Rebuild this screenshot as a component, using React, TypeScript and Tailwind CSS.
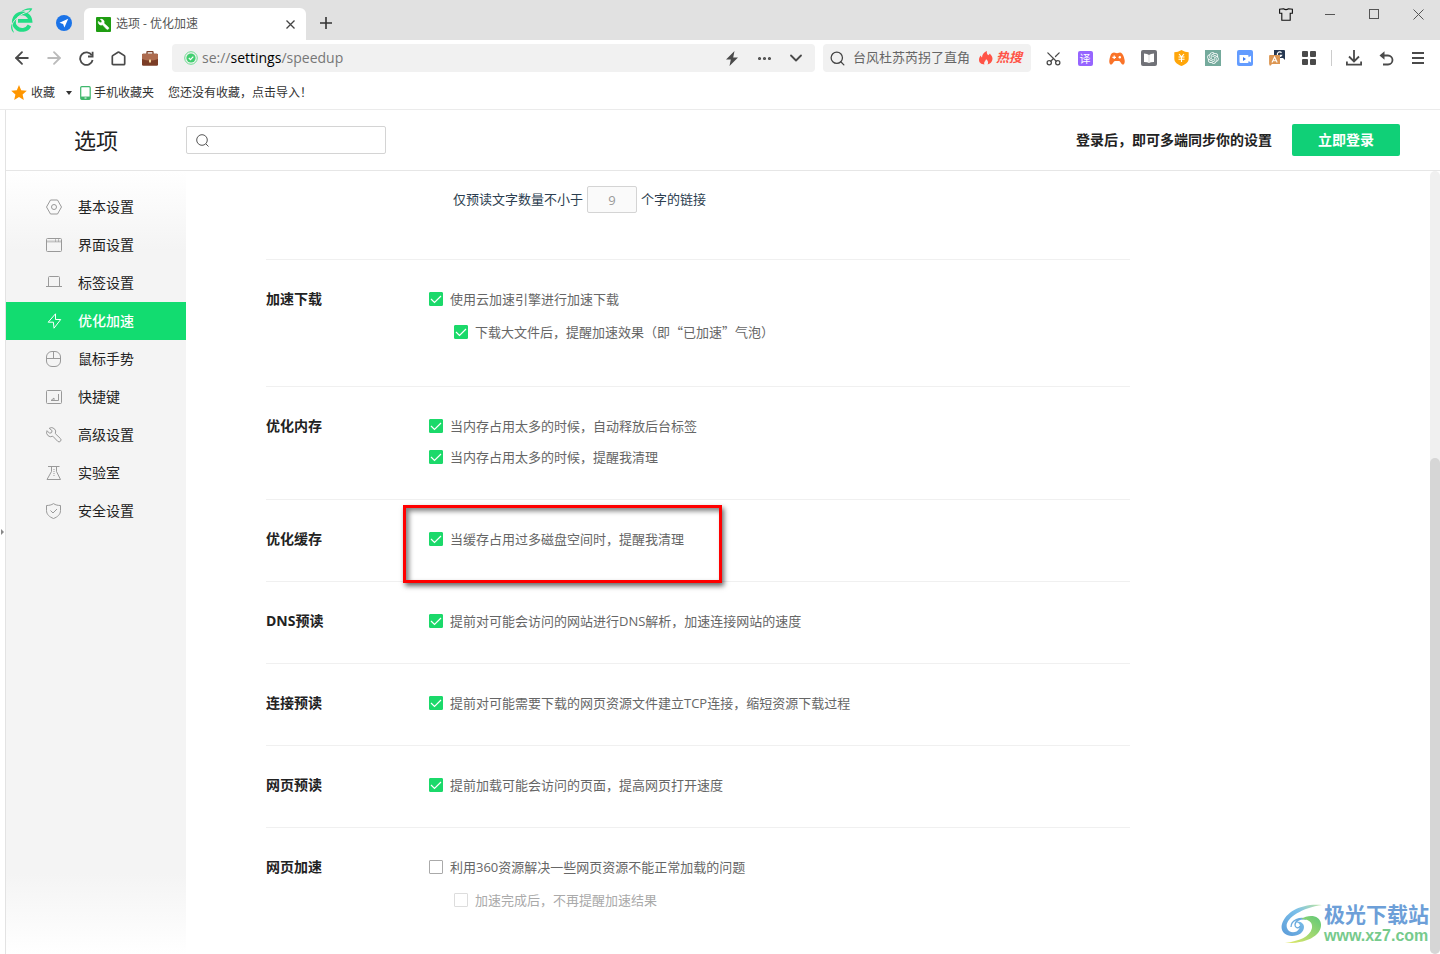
import { useState } from 'react';
import type { ReactNode } from 'react';
import { ArrowLeft, ArrowRight, ChevronDown, Ellipsis, Scissors, Search } from 'lucide-react';
import { RiOpenaiFill } from 'react-icons/ri';

interface Option {
  id: string;
  label: string;
  checked: boolean;
  nested?: boolean;
  disabled?: boolean;
}

interface Section {
  title: string;
  options: Option[];
  highlighted?: boolean;
}

const SECTIONS: Section[] = [
  {
    title: '加速下载',
    options: [
      { id: 'cloud', label: '使用云加速引擎进行加速下载', checked: true },
      { id: 'bubble', label: '下载大文件后，提醒加速效果（即“已加速”气泡）', checked: true, nested: true },
    ],
  },
  {
    title: '优化内存',
    options: [
      { id: 'release', label: '当内存占用太多的时候，自动释放后台标签', checked: true },
      { id: 'memory', label: '当内存占用太多的时候，提醒我清理', checked: true },
    ],
  },
  {
    title: '优化缓存',
    highlighted: true,
    options: [{ id: 'cache', label: '当缓存占用过多磁盘空间时，提醒我清理', checked: true }],
  },
  {
    title: 'DNS预读',
    options: [{ id: 'dns', label: '提前对可能会访问的网站进行DNS解析，加速连接网站的速度', checked: true }],
  },
  {
    title: '连接预读',
    options: [{ id: 'tcp', label: '提前对可能需要下载的网页资源文件建立TCP连接，缩短资源下载过程', checked: true }],
  },
  {
    title: '网页预读',
    options: [{ id: 'preload', label: '提前加载可能会访问的页面，提高网页打开速度', checked: true }],
  },
  {
    title: '网页加速',
    options: [
      { id: 'res360', label: '利用360资源解决一些网页资源不能正常加载的问题', checked: false },
      { id: 'result', label: '加速完成后，不再提醒加速结果', checked: false, nested: true, disabled: true },
    ],
  },
];

// Sidebar icons all share a 16px box and a 1px stroke
const MENU: { label: string; icon: ReactNode }[] = [
  {
    label: '基本设置',
    icon: (
      <>
        <path d="M4.5 1h7l4 7-4 7h-7l-4-7z" />
        <circle cx="8" cy="8" r="2.5" />
      </>
    ),
  },
  {
    label: '界面设置',
    icon: (
      <>
        <path d="M1 4.500h14" strokeOpacity="0.5" strokeWidth="2" />
        <path d="M9.500 2v3M12.500 2v3" strokeOpacity="0.6" />
        <rect x="0.5" y="1.5" width="15" height="13" rx="1" />
      </>
    ),
  },
  { label: '标签设置', icon: <path d="M2.5 12V2.5q0-1 1-1h9q1 0 1 1V12M0 11.5h16" /> },
  { label: '优化加速', icon: <path d="M9.5 .8 2.2 9.2h5.2L8 15.2l6.7-8.7H9.5z" /> },
  {
    label: '鼠标手势',
    icon: (
      <>
        <rect x="0.5" y="0.5" width="14" height="15" rx="5.5" />
        <path d="M.5 7.5h14M7.5.5v7" />
      </>
    ),
  },
  {
    label: '快捷键',
    icon: (
      <>
        <rect x="0.5" y="1.5" width="15" height="13" rx="1" />
        <path d="M12.500 5v6.500H5L8 9v2" />
      </>
    ),
  },
  {
    label: '高级设置',
    icon: (
      <path d="M3.200 1.300A4.200 4.200 0 0 1 9.300 6.600l5.100 4.900a1.900 1.900 0 0 1-2.700 2.800L6.800 9.200A4.200 4.200 0 0 1 1 3.700l2.500 2.500 2-.5.6-2z" strokeLinejoin="round" />
    ),
  },
  {
    label: '实验室',
    icon: (
      <>
        <path d="M2 1.500h11.500M5.500 1.500v5L1 14.500h13.500L10.500 6.500v-5" />
        <path d="M8 4v7" strokeDasharray="1 1" />
      </>
    ),
  },
  {
    label: '安全设置',
    icon: (
      <>
        <path d="M7.5.6C9.500 2 12 2.500 14.500 2.500v5c0 4-3 6.500-7 8-4-1.500-7-4-7-8v-5C3 2.500 5.500 2 7.500.6z" />
        <path d="m4.500 7.500 2.500 2.500 4-4" />
      </>
    ),
  },
];

function ToolButton({ label, children }: { label: string; children: ReactNode }) {
  return (
    <button type="button" aria-label={label} className="flex h-7 w-8 shrink-0 items-center justify-center text-[#4a4a4a]">
      {children}
    </button>
  );
}

function BrowserLogo() {
  return (
    <svg width="24" height="26" viewBox="0 0 24 26" fill="none" className="shrink-0">
      <path d="M19.500 18.500a8.300 8.300 0 1 1 .9-4.700H8" stroke="#22dd85" strokeWidth="3.800" />
      <path d="M1.300 20.500C2 14 10 6.500 18 5" stroke="#e1e1e1" strokeWidth="1" />
      <path d="M3.500 25.500C.8 23 .6 19.500 2 16.500c.3 3.500.3 6 2 9z" fill="#22dd85" />
      <path d="M11 4.800C14 1.500 19 .5 22.300 1.500 21.500 4 19 5.800 16 6.500c2-1.200 3.400-2.300 4.200-3.700-3-.4-6 .4-9.200 2z" fill="#22dd85" />
    </svg>
  );
}

function TabStrip() {
  return (
    <div className="flex h-10 items-end bg-[#e1e1e1]">
      <div className="flex h-10 flex-1 items-end pl-[10px]">
        <div className="flex h-10 w-[46px] items-center">
          <BrowserLogo />
        </div>
        <button type="button" aria-label="导航" className="mr-3 flex h-[34px] w-4 items-center">
          <svg width="16" height="16" viewBox="0 0 16 16">
            <circle cx="8" cy="8" r="8" fill="#1a73e8" />
            <path d="M12.200 3.800 3.500 7.700l3.600 1.200 1.300 3.700z" fill="#fff" />
          </svg>
        </button>
        <div className="flex h-8 w-[222px] items-center rounded-t-md bg-white pr-2 pl-3">
          <svg width="15" height="15" viewBox="0 0 15 15" className="shrink-0">
            <rect width="15" height="15" rx="1" fill="#1f9d12" />
            <path d="M2.300 4.300a3 3 0 0 0 4.200 3.500l4 4.300a1.300 1.300 0 0 0 1.900-1.900L8 6.300A3 3 0 0 0 4.300 2.300l1.700 1.700-.4 1.300-1.400.5z" fill="#fff" stroke="#fff" strokeWidth="0.500" />
          </svg>
          <span className="ml-[5px] flex-1 text-xs text-[#555]">选项 - 优化加速</span>
          <button type="button" aria-label="关闭标签" className="flex h-4 w-4 items-center justify-center">
            <svg width="9" height="9" viewBox="0 0 9 9" stroke="#444" strokeWidth="1.300">
              <path d="m.5.5 8 8M8.500.5l-8 8" />
            </svg>
          </button>
        </div>
        <button type="button" aria-label="新建标签" className="flex h-[34px] w-10 items-center justify-center">
          <svg width="12" height="12" viewBox="0 0 12 12" stroke="#333" strokeWidth="1.600">
            <path d="M0 6h12M6 0v12" />
          </svg>
        </button>
      </div>
      <div className="flex h-10 items-start">
        <button type="button" aria-label="皮肤" className="flex h-7 w-11 items-center justify-center">
          <svg width="14" height="13" viewBox="0 0 14 13" fill="none" stroke="#111" strokeWidth="1.100">
            <path d="M4.500.8q2.500 1.600 5 0l3.900.4v4h-2.200v7H2.800v-7H.6v-4z" />
          </svg>
        </button>
        <button type="button" aria-label="最小化" className="flex h-7 w-11 items-center justify-center">
          <svg width="10" height="10" viewBox="0 0 10 10" stroke="#555">
            <path d="M0 5.500h10" />
          </svg>
        </button>
        <button type="button" aria-label="最大化" className="flex h-7 w-11 items-center justify-center">
          <svg width="10" height="10" viewBox="0 0 10 10" stroke="#555" fill="none">
            <rect x="0.5" y="0.5" width="9" height="9" />
          </svg>
        </button>
        <button type="button" aria-label="关闭" className="flex h-7 w-11 items-center justify-center">
          <svg width="11" height="11" viewBox="0 0 11 11" stroke="#555">
            <path d="m.5.5 10 10M10.500.5l-10 10" />
          </svg>
        </button>
      </div>
    </div>
  );
}

function Toolbar() {
  return (
    <div className="flex h-9 items-center bg-white px-[6px]">
      <ToolButton label="后退">
        <ArrowLeft size={20} strokeWidth={2.200} />
      </ToolButton>
      <ToolButton label="前进">
        <ArrowRight size={20} strokeWidth={2.200} className="text-[#bbb]" />
      </ToolButton>
      <ToolButton label="刷新">
        <svg width="15" height="15" viewBox="0 0 15 15" fill="none" stroke="currentColor" strokeWidth="1.800">
          <path d="M12.800 4.300A6.300 6.300 0 1 0 13.600 9" />
          <path d="M13.600.8v4.700H9" />
        </svg>
      </ToolButton>
      <ToolButton label="主页">
        <svg width="15" height="15" viewBox="0 0 15 15" fill="none" stroke="currentColor" strokeWidth="1.700">
          <path d="M1.300 5.500Q1.300 5 1.700 4.600L7 1.200q.5-.3 1 0l5.300 3.400q.4.400.4.900v7.200q0 1-1 1H2.300q-1 0-1-1z" />
        </svg>
      </ToolButton>
      <ToolButton label="工具箱">
        <svg width="16" height="15" viewBox="0 0 16 15">
          <path d="M5 3V1.200Q5 .7 5.500.7h5q.5 0 .5.5V3" fill="none" stroke="#7a4029" strokeWidth="1.300" />
          <rect y="2.800" width="16" height="12" rx="1.300" fill="#7b3d26" />
          <path d="M0 4q0-1.200 1.300-1.200h13.400Q16 2.800 16 4v4q-8 3-16 0z" fill="#ad6b4e" />
          <rect x="7" y="8.500" width="2" height="3" rx="0.500" fill="#f5d9a0" />
        </svg>
      </ToolButton>

      <div className="ml-[6px] flex h-7 flex-1 items-center rounded bg-[#f1f1f1] pr-[3px] pl-3">
        <svg width="14" height="14" viewBox="0 0 14 14" fill="none" className="shrink-0">
          <circle cx="7" cy="7" r="6.300" stroke="#6fdd92" />
          <circle cx="7" cy="7" r="4.600" fill="#42cf70" />
          <path d="m4.800 7 1.700 1.600 2.800-3" stroke="#fff" strokeWidth="1.200" />
        </svg>
        <div
          role="textbox"
          aria-label="地址栏"
          contentEditable
          suppressContentEditableWarning
          className="ml-1 flex-1 text-sm whitespace-nowrap text-[#777] outline-none"
        >
          se://<span className="text-black">settings</span>/speedup
        </div>
        <ToolButton label="极速模式">
          <svg width="12" height="15" viewBox="0 0 12 15" fill="currentColor">
            <path d="M8.500 0 0 8.500h4.800L3.500 15 12 6.500H7.200z" />
          </svg>
        </ToolButton>
        <ToolButton label="更多">
          <Ellipsis size={17} strokeWidth={2.500} />
        </ToolButton>
        <ToolButton label="展开">
          <ChevronDown size={20} strokeWidth={2.200} />
        </ToolButton>
      </div>

      <div className="ml-2 flex h-7 w-[208px] items-center rounded bg-[#f1f1f1] pl-[6px]">
        <Search size={17} strokeWidth={1.800} className="shrink-0 text-[#444]" />
        <input
          type="text"
          aria-label="搜索"
          placeholder="台风杜苏芮拐了直角"
          className="ml-[7px] w-[120px] text-[13px] outline-none placeholder:text-[#666]"
        />
        <a href="#hot" className="ml-[6px] flex items-center gap-[3px] text-[13px] font-bold whitespace-nowrap text-[#ff5346] italic">
          <svg width="14" height="14" viewBox="0 0 14 14" fill="currentColor">
            <path d="M5.500 13.500C2 13.500 0 11.500 0 8.800 0 6.800 1 5.500 1.800 4.500c.2 1 .6 1.500 1.200 2C3.200 3.500 5 1 8 0c-.6 2 .2 3.200 1.300 4.300L11 2.500c.2 1.200 2.700 2.500 2.500 5.500-.2 3-2.500 5-5 5.500 1-1.500 1-3.500-1.500-5.500 0 2-2.800 3-1.500 5.500z" />
          </svg>
          热搜
        </a>
      </div>

      <div className="ml-[6px] flex items-center">
        <ToolButton label="截图">
          <Scissors size={17} strokeWidth={1.800} className="-rotate-90" />
        </ToolButton>
        <ToolButton label="翻译">
          <span className="flex h-[15px] w-[15px] items-center justify-center rounded-xs bg-[#9665ff] text-[11px] leading-none text-white">译</span>
        </ToolButton>
        <ToolButton label="游戏">
          <svg width="16" height="13" viewBox="0 0 16 13">
            <path d="M4 .8Q5 .3 6 .8q2 .8 4 0 1-.5 2 0Q14.500 2 15.600 8c.5 3-.6 4.600-1.600 4.600-1.800 0-2.500-3.600-4-3.600H6c-1.500 0-2.200 3.600-4 3.600C1 12.600-.1 11 .4 8 1.500 2 2.500 1.500 4 .8z" fill="#fa7328" />
            <path d="M5.200 3.500v3.600M3.400 5.300H7" stroke="#fff" strokeWidth="1.200" />
            <circle cx="10.800" cy="5.300" r="1.200" fill="#fff" />
          </svg>
        </ToolButton>
        <ToolButton label="阅读">
          <svg width="16" height="16" viewBox="0 0 16 16">
            <rect width="16" height="16" rx="2" fill="#707177" />
            <path d="M3 3.500q3.500 0 5 1.500 1.500-1.500 5-1.500v8.500q-3.500 0-5 1-1.500-1-5-1z" fill="#fff" />
            <path d="M8 5v8" stroke="#ccc" strokeWidth="0.700" />
          </svg>
        </ToolButton>
        <ToolButton label="购物">
          <svg width="15" height="16" viewBox="0 0 15 16">
            <path d="M7.500 0Q11 2.200 14.700 2.200v6.300c0 4-3.500 6-7.200 7.500C3.800 14.500.3 12.500.3 8.500V2.200Q4 2.200 7.500 0z" fill="#ffa60a" />
            <path d="m5 4 2.500 2.800L10 4M4.500 7h6M4.500 9.300h6M7.500 7v5" stroke="#fff" strokeWidth="1.100" fill="none" />
          </svg>
        </ToolButton>
        <ToolButton label="AI 助手">
          <span className="flex h-4 w-4 items-center justify-center bg-[#74aa9c] text-white">
            <RiOpenaiFill size={14} />
          </span>
        </ToolButton>
        <ToolButton label="录屏">
          <svg width="16" height="16" viewBox="0 0 16 16">
            <rect width="16" height="16" rx="2" fill="#639cff" />
            <path d="M2.500 5h8q1 0 1 1v1.200l2.500-1.500v6.800l-2.500-1.500v1.200q0 .8-1 .8h-7q-1 0-1-1z" fill="#fff" />
            <path d="M6 7v4l3-2z" fill="#3d7df0" />
          </svg>
        </ToolButton>
        <ToolButton label="划词翻译">
          <svg width="16" height="16" viewBox="0 0 16 16" fill="none">
            <path d="M5 0h10q1 0 1 1v9l-2-2H5z" fill="#263852" />
            <path d="M12.500 2.800a2.300 2.300 0 1 0 .2 2.400h-2" stroke="#fff" strokeWidth="1.100" />
            <path d="M1 5h9q1 0 1 1v8H3l-2 2-.9-2V6q0-1 .9-1z" fill="#dc9652" />
            <path d="m3 12.500 2.600-5.500 2.600 5.500M4 10.800h3.200" stroke="#fff" strokeWidth="1.100" />
          </svg>
        </ToolButton>
        <ToolButton label="扩展">
          <svg width="14" height="14" viewBox="0 0 14 14" fill="currentColor">
            <rect width="6" height="6" rx="1" />
            <rect x="8" width="6" height="6" rx="1" />
            <rect y="8" width="6" height="6" rx="1" />
            <rect x="8" y="8" width="6" height="6" rx="1" />
          </svg>
        </ToolButton>
        <span className="mx-[6px] h-4 w-px bg-[#ccc]" />
        <ToolButton label="下载">
          <svg width="16" height="16" viewBox="0 0 16 16" fill="none" stroke="currentColor" strokeWidth="1.800">
            <path d="M8 0v11M3 6.500l5 5 5-5M.9 11.500v3.200h14.200v-3.200" />
          </svg>
        </ToolButton>
        <ToolButton label="恢复">
          <svg width="15" height="15" viewBox="0 0 15 15" fill="none" stroke="currentColor" strokeWidth="1.800">
            <path d="M2 4.500h7a4.500 4.500 0 0 1 0 9H4" />
            <path d="M5.500.3v8.400L.5 4.500z" fill="currentColor" stroke="none" />
          </svg>
        </ToolButton>
        <ToolButton label="菜单">
          <svg width="12" height="12" viewBox="0 0 12 12" stroke="currentColor" strokeWidth="1.800">
            <path d="M0 1h12M0 6h12M0 11h12" />
          </svg>
        </ToolButton>
      </div>
    </div>
  );
}

function BookmarkBar() {
  return (
    <div className="flex h-[34px] items-center border-b border-[#ebebeb] bg-white pl-[11px] text-xs text-[#333]">
      <button type="button" className="flex items-center">
        <svg width="16" height="15" viewBox="0 0 16 15" fill="#ff9600">
          <path d="m8 0 2.200 5.200 5.600.5-4.200 3.700 1.200 5.500L8 12l-4.800 2.900 1.200-5.500L.2 5.700l5.600-.5z" />
        </svg>
        <span className="ml-1">收藏</span>
        <svg width="6" height="4" viewBox="0 0 6 4" fill="#333" className="ml-[11px]">
          <path d="M0 0h6L3 4z" />
        </svg>
      </button>
      <a href="#mobile" className="ml-2 flex items-center gap-[3px]">
        <svg width="11" height="14" viewBox="0 0 11 14" fill="none">
          <rect x="0.700" y="0.700" width="9.500" height="12.600" rx="1" stroke="#3fb76c" strokeWidth="1.200" />
          <path d="M1 11.800h9" stroke="#3fb76c" strokeWidth="2.500" />
          <path d="M4.500 12h2" stroke="#fff" />
        </svg>
        手机收藏夹
      </a>
      <a href="#import" className="ml-[14px]">您还没有收藏，点击导入！</a>
    </div>
  );
}

function Header() {
  return (
    <header className="flex h-[61px] items-center border-b border-[#e6e6e6] bg-white pr-10 pl-[68px]">
      <h1 className="w-28 text-[22px] text-[#222]">选项</h1>
      <label className="flex h-7 w-[200px] items-center rounded-xs border border-[#d4d4d4] pl-[9px]">
        <svg width="13" height="13" viewBox="0 0 13 13" fill="none" stroke="#555" className="shrink-0">
          <circle cx="6" cy="6" r="5.300" />
          <path d="m9.800 9.800 2.700 2.700" />
        </svg>
        <input type="search" aria-label="搜索设置" className="ml-2 w-40 text-[13px] outline-none" />
      </label>
      <p className="ml-auto text-sm font-bold text-[#222]">登录后，即可多端同步你的设置</p>
      <button type="button" className="ml-5 h-8 w-[108px] rounded-xs bg-[#10d077] text-sm font-bold text-white">
        立即登录
      </button>
    </header>
  );
}

function Sidebar() {
  return (
    <nav className="w-[180px] shrink-0 bg-[linear-gradient(#fff,#f4f4f4_80px,#f4f4f4_calc(100%-80px),#fff)] pt-[17px]">
      <div className="flex flex-col">
        {MENU.map((item) => {
          const active = item.label === '优化加速';
          return (
            <a
              key={item.label}
              href="#"
              aria-current={active ? 'page' : undefined}
              className={`flex h-[38px] items-center gap-4 pl-10 text-sm ${active ? 'bg-[#12dc70] font-medium text-white' : 'text-[#222]'}`}
            >
              <svg width="16" height="16" viewBox="0 0 16 16" fill="none" strokeWidth="1" stroke="currentColor" className={active ? 'text-white' : 'text-[#999]'}>
                {item.icon}
              </svg>
              {item.label}
            </a>
          );
        })}
      </div>
    </nav>
  );
}

function OptionRow({ option, checked, onToggle }: { option: Option; checked: boolean; onToggle: () => void }) {
  // Curly quotes are full width only in the CJK face
  const face = option.label.includes('“') ? "font-['Noto_Sans_CJK_SC',sans-serif]" : '';
  return (
    <label className={`flex items-center gap-[7px] text-[13px] leading-5 ${face} ${option.nested ? 'pl-[25px]' : ''} ${option.disabled ? 'text-[#aaa]' : 'text-[#666]'}`}>
      <span className="grid h-[14px] w-[14px] shrink-0">
        <input
          type="checkbox"
          checked={checked}
          disabled={option.disabled}
          onChange={onToggle}
          className="col-start-1 row-start-1 h-[14px] w-[14px] appearance-none rounded-[1px] border border-[#aaa] bg-white checked:border-[#1bd96a] checked:bg-[#1bd96a] disabled:border-[#ddd]"
        />
        {checked && (
          <svg width="14" height="14" viewBox="0 0 14 14" fill="none" stroke="#fff" strokeWidth="1.200" className="pointer-events-none col-start-1 row-start-1">
            <path d="m2 7 3.500 3.500 6.500-6.500" />
          </svg>
        )}
      </span>
      {option.label}
    </label>
  );
}

function Watermark() {
  return (
    <div className="pointer-events-none absolute right-[11px] bottom-2 flex items-center gap-[2px]">
      <svg width="41" height="40" viewBox="0 0 41 40" fill="none">
        <defs>
          <linearGradient id="swirlBlue" x1="0" y1="1" x2="1" y2="0">
            <stop offset="0" stopColor="#5b9bd8" />
            <stop offset="0.600" stopColor="#7cc0ea" />
            <stop offset="1" stopColor="#bfe6a0" />
          </linearGradient>
          <linearGradient id="swirlGreen" x1="0" y1="1" x2="1" y2="0">
            <stop offset="0" stopColor="#e6e96a" />
            <stop offset="1" stopColor="#5fc878" />
          </linearGradient>
        </defs>
        <path d="M41 1C22-1 5 7 1 20c-2 7 3 12 10 12 7 0 12-4 12-9 0-4-4-6-8-5 4 1 5 4 3 7-2 4-10 5-12-1C3 15 20 4 41 1z" fill="url(#swirlBlue)" />
        <path d="M10 23c0-7 9-10 15-8-6-1-11 2-11 6 0 3 4 4 5 1" stroke="#6aaade" strokeWidth="1.300" />
        <path d="M20 15c8-5 19-4 20 5 1 10-12 20-36 19 14-2 25-6 27-15 1-6-4-9-11-9z" fill="url(#swirlGreen)" />
      </svg>
      <div className="flex flex-col">
        <span className="text-[21px] leading-6 font-bold text-[#6d9fd8]">极光下载站</span>
        <span className="font-['Liberation_Sans',sans-serif] text-base leading-5 font-bold text-[#76ca8c]">www.xz7.com</span>
      </div>
    </div>
  );
}

export default function App() {
  const [values, setValues] = useState<Record<string, boolean>>(() =>
    Object.fromEntries(SECTIONS.flatMap((s) => s.options.map((o) => [o.id, o.checked]))),
  );

  const toggle = (id: string) => setValues((prev) => ({ ...prev, [id]: !prev[id] }));

  return (
    <div className="relative flex min-h-screen flex-col bg-white font-['Open_Sans','Noto_Sans_CJK_SC',sans-serif]">
      <TabStrip />
      <Toolbar />
      <BookmarkBar />

      <div className="flex flex-1">
        <button type="button" aria-label="展开侧栏" className="flex w-[5px] shrink-0 items-center">
          <svg width="4" height="6" viewBox="0 0 4 6" fill="#888">
            <path d="M1 0v6l3-3z" />
          </svg>
        </button>
        <div className="flex flex-1 flex-col border-l border-[#e3e3e3]">
          <Header />
          <div className="flex flex-1">
            <Sidebar />
            <main className="flex-1 px-20 pb-8">
              <div className="max-w-[864px]">
                <div className="flex items-center gap-1 border-b border-[#f0f0f0] pt-[15px] pb-[46px] pl-[187px] text-[13px] text-[#2c3e50]">
                  <label htmlFor="min-chars">仅预读文字数量不小于</label>
                  <input
                    id="min-chars"
                    type="text"
                    defaultValue="9"
                    disabled
                    className="h-[27px] w-[50px] rounded-xs border border-[#d4d4d4] bg-[#fafafa] text-center text-[#999]"
                  />
                  <span>个字的链接</span>
                </div>

                {SECTIONS.map((section) => {
                  const hasNested = section.options.some((o) => o.nested);
                  return (
                    <section
                      key={section.title}
                      className={`relative flex border-b border-[#f0f0f0] pt-[29px] last:border-b-0 last:pb-0 ${hasNested ? 'pb-11' : 'pb-8'}`}
                    >
                      <h2 className="w-[163px] shrink-0 text-sm leading-5 font-bold text-[#222]">{section.title}</h2>
                      <div className={`flex flex-col items-start ${hasNested ? 'gap-[13px]' : 'gap-[11px]'}`}>
                        {section.options.map((option) => (
                          <OptionRow key={option.id} option={option} checked={values[option.id]} onToggle={() => toggle(option.id)} />
                        ))}
                      </div>
                      {section.highlighted && (
                        <div className="pointer-events-none absolute top-[5px] left-[137px] z-10 h-[78px] w-[319px] border-3 border-[#f00] shadow-[2px_3px_5px_rgba(0,0,0,0.6),inset_3px_3px_5px_rgba(0,0,0,0.5)]" />
                      )}
                    </section>
                  );
                })}
              </div>
            </main>
            {/* Scroll track with its thumb at the lower end */}
            <div className="flex w-[10px] shrink-0 flex-col rounded-full bg-[#f0f0f0] pt-[287px]">
              <div className="flex-1 rounded-full bg-[#d6d6d6]" />
            </div>
          </div>
        </div>
      </div>

      <Watermark />
    </div>
  );
}
